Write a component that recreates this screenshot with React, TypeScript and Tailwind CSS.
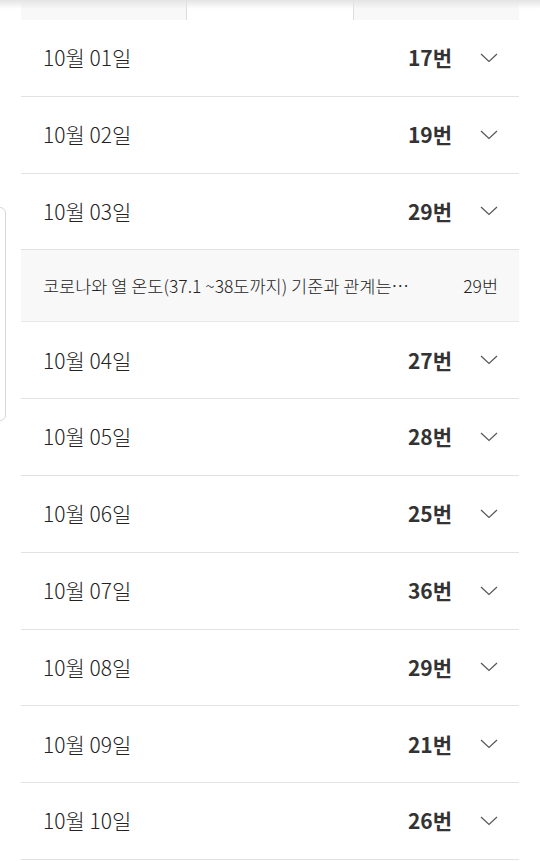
import React from 'react'

const days = [
  { date: '10월 01일', count: 17 },
  { date: '10월 02일', count: 19 },
  {
    date: '10월 03일',
    count: 29,
    items: [{ title: '코로나와 열 온도(37.1 ~38도까지) 기준과 관계는…', count: 29 }],
  },
  { date: '10월 04일', count: 27 },
  { date: '10월 05일', count: 28 },
  { date: '10월 06일', count: 25 },
  { date: '10월 07일', count: 36 },
  { date: '10월 08일', count: 29 },
  { date: '10월 09일', count: 21 },
  { date: '10월 10일', count: 26 },
]

function Chevron() {
  return (
    <svg width="18" height="10" viewBox="0 0 18 10" fill="none" className="ml-[28px]">
      <path d="M1 1l8 7.5L17 1" stroke="#555" strokeWidth="1.2" />
    </svg>
  )
}

export default function App() {
  return (
    <div
      className="relative h-[861px] w-[540px] overflow-hidden bg-white text-[#333]"
      style={{ fontFamily: '"Noto Sans CJK KR", "Noto Sans", sans-serif' }}
    >
      <div className="pointer-events-none absolute inset-x-0 top-0 h-[9px] bg-gradient-to-b from-[#e4e4e4] to-transparent" />
      <div className="absolute left-[-12px] top-[207px] h-[214px] w-[18px] rounded-md border border-[#d6d6d6] bg-white" />

      <div className="mx-[21px]">
        <div className="flex h-[20px]">
          <div className="flex-1 border-r border-[#dedede] bg-[#f8f8f8]" />
          <div className="flex-1 border-r border-[#dedede] bg-white" />
          <div className="flex-1 bg-[#f8f8f8]" />
        </div>

        {days.map((d) => (
          <div key={d.date}>
            <div className="flex h-[76.8px] items-center border-b border-[#e2e2e2] pl-[22px] pr-[21px]">
              <span className="flex-1 text-[21px] font-light text-[#222]">{d.date}</span>
              <span className="text-[21px] font-bold">{d.count}번</span>
              <Chevron />
            </div>
            {d.items?.map((it) => (
              <div
                key={it.title}
                className="flex h-[72px] items-center border-b border-[#e8e8e8] bg-[#f8f8f8] pl-[22px] pr-[21px] text-[17.5px] font-light text-[#222]"
              >
                <span className="flex-1 truncate pr-10">{it.title}</span>
                <span>{it.count}번</span>
              </div>
            ))}
          </div>
        ))}
      </div>
    </div>
  )
}
